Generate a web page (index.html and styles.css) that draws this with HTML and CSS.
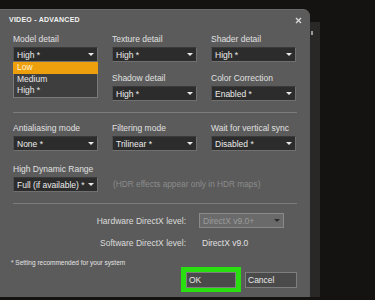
FILE: index.html
```html
<!DOCTYPE html>
<html>
<head>
<meta charset="utf-8">
<link rel="stylesheet" href="styles.css">
</head>
<body>
<div class="screen">
  <div class="dialog">
    <div class="titlebar">
      <span class="title">VIDEO - ADVANCED</span>
      <svg class="close" width="7" height="7" viewBox="0 0 7 7"><path d="M1 1L6 6M6 1L1 6" stroke="#d8d8d8" stroke-width="1.4"/></svg>
    </div>
    <div class="grid g1">
      <div class="field">
        <div class="label">Model detail</div>
        <div class="select"><span>High *</span><i class="arrow"></i></div>
        <div class="menu">
          <div class="opt sel">Low</div>
          <div class="opt">Medium</div>
          <div class="opt">High *</div>
        </div>
      </div>
      <div class="field">
        <div class="label">Texture detail</div>
        <div class="select"><span>High *</span><i class="arrow"></i></div>
      </div>
      <div class="field">
        <div class="label">Shader detail</div>
        <div class="select"><span>High *</span><i class="arrow"></i></div>
      </div>
      <div class="field"></div>
      <div class="field">
        <div class="label">Shadow detail</div>
        <div class="select"><span>High *</span><i class="arrow"></i></div>
      </div>
      <div class="field">
        <div class="label">Color Correction</div>
        <div class="select"><span>Enabled *</span><i class="arrow"></i></div>
      </div>
    </div>
    <div class="sep"></div>
    <div class="grid g2">
      <div class="field">
        <div class="label">Antialiasing mode</div>
        <div class="select"><span>None *</span><i class="arrow"></i></div>
      </div>
      <div class="field">
        <div class="label">Filtering mode</div>
        <div class="select"><span>Trilinear *</span><i class="arrow"></i></div>
      </div>
      <div class="field">
        <div class="label">Wait for vertical sync</div>
        <div class="select"><span>Disabled *</span><i class="arrow"></i></div>
      </div>
      <div class="field">
        <div class="label">High Dynamic Range</div>
        <div class="select"><span>Full (if available) *</span><i class="arrow"></i></div>
      </div>
      <div class="field note-field">
        <div class="note">(HDR effects appear only in HDR maps)</div>
      </div>
    </div>
    <div class="sep sep2"></div>
    <div class="dx">
      <div class="dxrow">
        <div class="dxlabel">Hardware DirectX level:</div>
        <div class="select disabled"><span>DirectX v9.0+</span><i class="arrow"></i></div>
      </div>
      <div class="dxrow sw">
        <div class="dxlabel">Software DirectX level:</div>
        <div class="dxval">DirectX v9.0</div>
      </div>
    </div>
    <div class="footnote">* Setting recommended for your system</div>
    <div class="buttons">
      <div class="okwrap"><div class="btn">OK</div></div>
      <div class="btn cancel">Cancel</div>
    </div>
  </div>
  <div class="side"><div class="sidemark"></div></div>
</div>
</body>
</html>
```

FILE: styles.css
```css
html, body {
  margin: 0;
  padding: 0;
}
body {
  width: 375px;
  height: 300px;
  overflow: hidden;
  background: #151212;
  font-family: "Liberation Sans", Arial, sans-serif;
  color: #e6e6e6;
}
.screen {
  display: flex;
  padding-top: 9px;
  height: 291px;
}
.dialog {
  position: relative;
  width: 310px;
  height: 288px;
  background: #5b5b5b;
  border-top: 1px solid #6a6a6a;
  box-sizing: border-box;
  border-radius: 0 7px 0 0;
  display: flex;
  flex-direction: column;
}
.side {
  width: 10px;
  margin-top: 13px;
  height: 275px;
  background: #2a2727;
  position: relative;
}
.sidemark {
  position: absolute;
  left: 1px;
  top: 9px;
  width: 2px;
  height: 4px;
  background: #9a9a9a;
}
.titlebar {
  height: 18px;
  display: flex;
  align-items: center;
  justify-content: space-between;
  padding: 0 8px 0 9px;
}
.title {
  font-size: 7px;
  font-weight: bold;
  color: #f2f2f2;
  letter-spacing: 0.25px;
  margin-top: 1px;
}
.close {
  margin-top: 2px;
}
.grid {
  display: grid;
  grid-template-columns: 85px 85px 85px;
  column-gap: 14px;
  padding-left: 13px;
}
.g1 {
  margin-top: 6px;
  row-gap: 11px;
}
.g2 {
  margin-top: 10px;
  row-gap: 13px;
}
.field {
  position: relative;
  display: flex;
  flex-direction: column;
}
.label {
  font-size: 8.5px;
  line-height: 10px;
  height: 10px;
  margin-bottom: 3px;
  color: #e0e0e0;
  white-space: nowrap;
}
.select {
  height: 15px;
  box-sizing: border-box;
  background: #2c2c2c;
  border: 1px solid #707070;
  border-top-color: #3a3a3a;
  border-left-color: #505050;
  display: flex;
  align-items: center;
  justify-content: space-between;
  padding: 0 3px 0 3px;
  font-size: 8.5px;
  color: #ececec;
  white-space: nowrap;
}
.arrow {
  width: 0;
  height: 0;
  border-left: 3px solid transparent;
  border-right: 3px solid transparent;
  border-top: 3px solid #e8e8e8;
}
.menu {
  position: absolute;
  left: 0;
  top: 28px;
  width: 85px;
  height: 36px;
  box-sizing: border-box;
  background: #3e3e3e;
  border: 1px solid #7a7a7a;
  border-top: none;
  z-index: 2;
}
.opt {
  height: 11.5px;
  line-height: 11.5px;
  padding-left: 3px;
  font-size: 8.5px;
  color: #e8e8e8;
}
.opt.sel {
  background: #eea00c;
  color: #fff4dc;
  margin: 0 -1px;
  padding-left: 4px;
}
.sep {
  height: 1px;
  background: #7c7c7c;
  margin: 11px 13px 0 13px;
}
.sep2 {
  margin-top: 11px;
}
.note-field {
  grid-column: 2 / 4;
  justify-content: flex-end;
}
.note {
  font-size: 8.3px;
  color: #8c8c8c;
  height: 15px;
  line-height: 15px;
  padding-left: 1px;
  white-space: nowrap;
}
.dx {
  display: flex;
  flex-direction: column;
  margin-top: 9px;
  row-gap: 7px;
}
.dxrow {
  display: flex;
  align-items: center;
  height: 15px;
}
.dxlabel {
  width: 199px;
  text-align: right;
  padding-right: 13px;
  box-sizing: border-box;
  font-size: 8.5px;
  color: #dcdcdc;
}
.dxrow .select {
  width: 85px;
}
.select.disabled {
  background: #6a6a6a;
  border-color: #8a8a8a;
  color: #9c9c9c;
}
.select.disabled .arrow {
  border-top-color: #2a2a2a;
}
.dxval {
  font-size: 8.5px;
  color: #e0e0e0;
  padding-left: 3px;
}
.footnote {
  margin-top: 8px;
  padding-left: 11px;
  font-size: 6.5px;
  color: #e4e4e4;
  height: 9px;
  line-height: 9px;
}
.buttons {
  display: flex;
  align-items: center;
  margin-top: 0;
  padding-left: 181px;
}
.okwrap {
  border: 5px solid #28e010;
  border-bottom-width: 4px;
}
.btn {
  width: 50px;
  height: 16px;
  box-sizing: border-box;
  background: #4a4a4a;
  border: 1px solid #7e7e7e;
  font-size: 8.5px;
  line-height: 14px;
  padding-left: 2px;
  color: #e8e8e8;
}
.cancel {
  width: 52px;
  margin-left: 4px;
}
```
